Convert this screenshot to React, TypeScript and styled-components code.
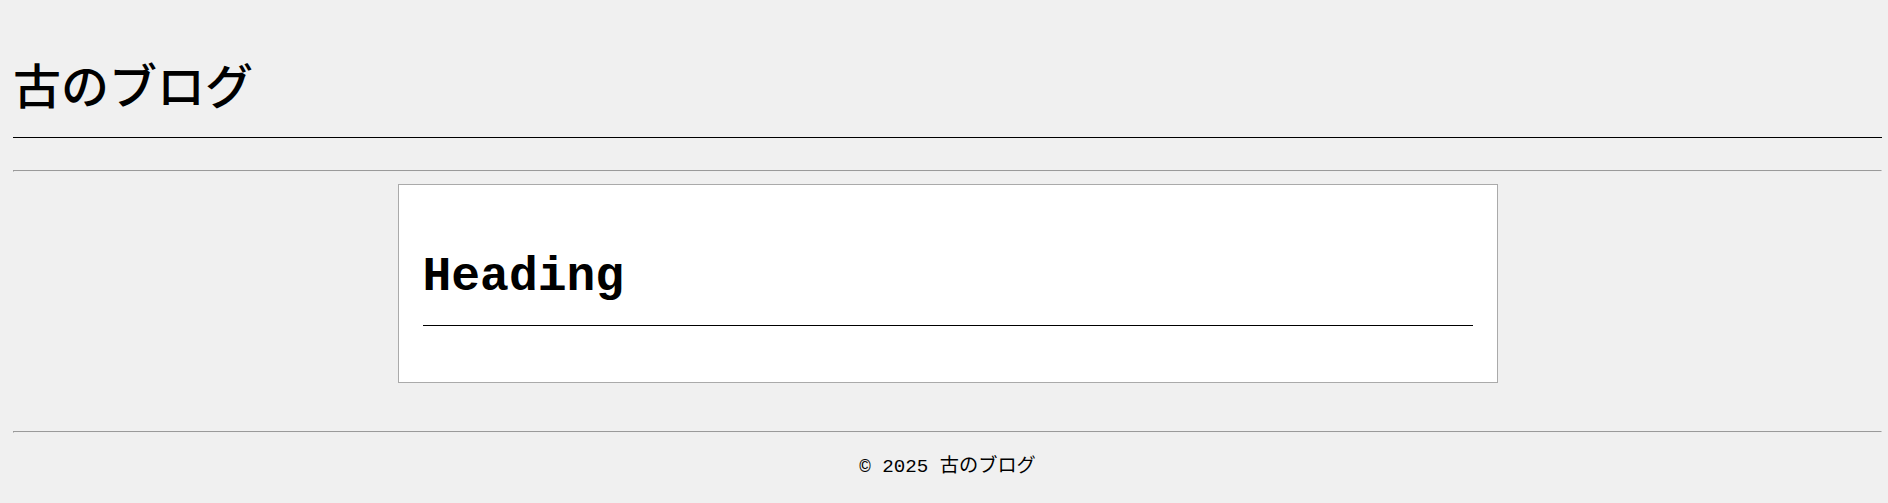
import React from "react";
import styled, { createGlobalStyle } from "styled-components";

const GlobalStyle = createGlobalStyle`
  html, body {
    margin: 0;
    padding: 0;
    background: #f0f0f0;
  }
  body {
    font-family: "Liberation Mono", "Noto Sans CJK JP", monospace;
    color: #000;
  }
`;

const Page = styled.div`
  padding: 0 6px 0 13px;
`;

const Header = styled.header`
  padding-top: 59px;
  padding-bottom: 30px;
  border-bottom: 1px solid #000;
`;

const SiteTitle = styled.h1`
  margin: 0;
  font-family: "Noto Sans CJK JP", sans-serif;
  font-weight: 500;
  font-size: 48px;
  line-height: 48px;
`;

const Rule = styled.hr<{ $top: number; $bottom: number }>`
  margin: ${(p) => p.$top}px 0 ${(p) => p.$bottom}px;
`;

const Main = styled.main`
  display: flex;
  justify-content: center;
`;

const Card = styled.article`
  box-sizing: border-box;
  width: 1100px;
  background: #fff;
  border: 1px solid #aaa;
  padding: 0 24px;
`;

const CardHeading = styled.h2`
  margin: 65px 0 56px;
  padding-bottom: 21px;
  border-bottom: 1px solid #000;
  font-family: "Liberation Mono", monospace;
  font-weight: 700;
  font-size: 48px;
  line-height: 54px;
`;

const Footer = styled.footer`
  padding-top: 22px;
  text-align: center;
  font-size: 19.2px;
  line-height: 24px;
`;

export default function App() {
  return (
    <>
      <GlobalStyle />
      <Page>
        <Header>
          <SiteTitle>古のブログ</SiteTitle>
        </Header>
        <Rule $top={32} $bottom={12} />
        <Main>
          <Card>
            <CardHeading>Heading</CardHeading>
          </Card>
        </Main>
        <Rule $top={48} $bottom={0} />
        <Footer>© 2025 古のブログ</Footer>
      </Page>
    </>
  );
}
